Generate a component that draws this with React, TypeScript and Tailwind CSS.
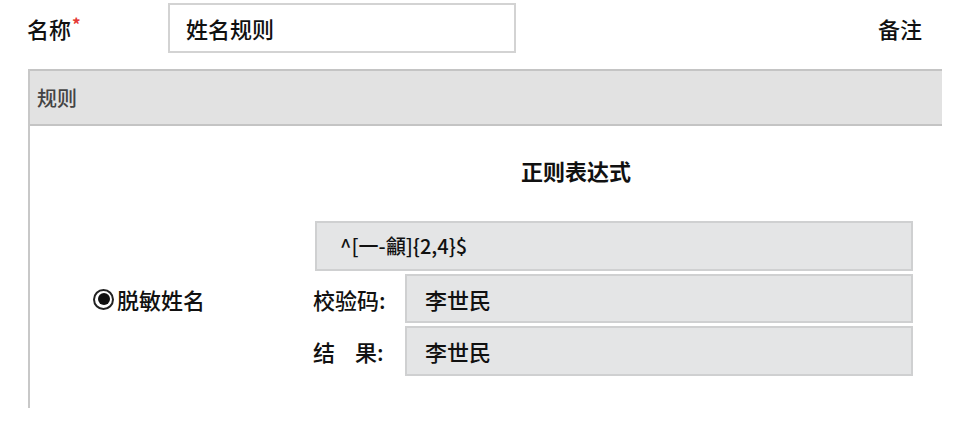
import React from "react";

const font = { fontFamily: '"Noto Sans CJK SC", "Noto Sans", sans-serif' };

export default function App() {
  return (
    <div
      className="w-[953px] h-[421px] bg-white overflow-hidden text-[#111] text-[22px] leading-[28px] font-medium"
      style={font}
    >
      {/* top row */}
      <div className="flex items-center h-[55px] pt-[1px]">
        <div className="w-[168px] pl-[27px] flex items-start">
          <span>名称</span>
          <span className="text-[#e53935] text-[17px] leading-[18px] font-bold mt-[1px] ml-[1px]">*</span>
        </div>
        <div className="w-[348px] h-[50px] border-2 border-[#d3d3d3] flex items-center pl-[16px]">
          姓名规则
        </div>
        <div className="ml-auto mr-[31px]">备注</div>
      </div>

      {/* panel */}
      <div className="ml-[28px] mt-[14px] w-[914px] border-l-2 border-[#c8c8c8] h-[339px]">
        <div className="h-[57px] bg-[#e2e2e2] border-y-2 border-[#c4c4c4] flex items-center pl-[7px] text-[20px] text-[#444]">
          规则
        </div>
        <div className="pl-[491px] pt-[30px] h-[61px] font-bold text-[22px]">正则表达式</div>
        <div className="flex mt-[34px]">
          <div className="w-[283px] pl-[63px] pt-[64px]">
            <div className="flex items-center">
              <span className="w-[21px] h-[21px] rounded-full border-2 border-[#222] bg-white flex items-center justify-center">
                <span className="w-[12px] h-[12px] rounded-full bg-[#111]" />
              </span>
              <span className="ml-[3px]">脱敏姓名</span>
            </div>
          </div>
          <div className="flex flex-col gap-[3px]">
            <div className="ml-[2px] w-[598px] h-[50px] bg-[#e4e5e6] border-2 border-[#cfd0d1] flex items-center pl-[23px] text-[20px]">
              ^[一-龥]{"{2,4}"}$
            </div>
            <div className="flex">
              <div className="w-[92px] flex items-center">校验码:</div>
              <div className="w-[508px] h-[49px] bg-[#e4e5e6] border-2 border-[#cfd0d1] flex items-center pl-[18px]">
                李世民
              </div>
            </div>
            <div className="flex">
              <div className="w-[92px] flex items-center">
                <span>结</span>
                <span className="ml-[20px]">果:</span>
              </div>
              <div className="w-[508px] h-[50px] bg-[#e4e5e6] border-2 border-[#cfd0d1] flex items-center pl-[18px]">
                李世民
              </div>
            </div>
          </div>
        </div>
      </div>
    </div>
  );
}
